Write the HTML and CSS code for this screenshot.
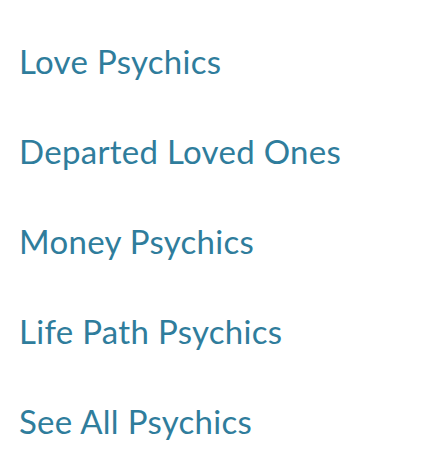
FILE: index.html
```html
<!DOCTYPE html>
<html>
<head>
<meta charset="utf-8">
<link rel="stylesheet" href="styles.css">
</head>
<body>
<ul class="menu">
  <li><a href="#">Love Psychics</a></li>
  <li><a href="#">Departed Loved Ones</a></li>
  <li><a href="#">Money Psychics</a></li>
  <li><a href="#">Life Path Psychics</a></li>
  <li><a href="#">See All Psychics</a></li>
</ul>
</body>
</html>
```
FILE: styles.css
```css
html, body {
  margin: 0;
  padding: 0;
  background: #ffffff;
}
.menu {
  list-style: none;
  margin: 0;
  padding: 16px 0 0 19px;
  display: flex;
  flex-direction: column;
}
.menu li {
  height: 90px;
  line-height: 90px;
}
.menu a {
  font-family: Lato, "Open Sans", sans-serif;
  font-size: 33px;
  letter-spacing: 0.3px;
  color: #2f7d9c;
  text-decoration: none;
}
```
